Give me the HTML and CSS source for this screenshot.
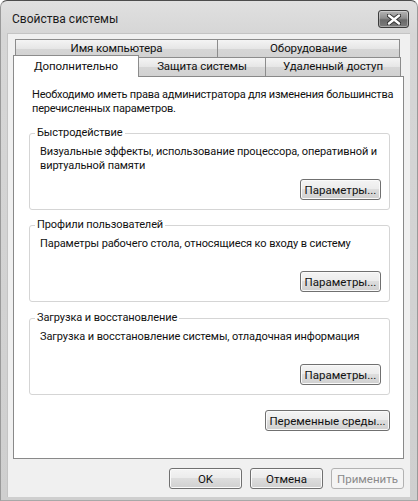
FILE: index.html
```html
<!DOCTYPE html>
<html lang="ru">
<head>
<meta charset="utf-8">
<title>Свойства системы</title>
<link rel="stylesheet" href="styles.css">
</head>
<body>
<div class="window">
  <div class="titlebar">
    <span class="title">Свойства системы</span>
    <button class="close" aria-label="Закрыть">
      <svg width="14" height="11" viewBox="0 0 14 11"><path d="M2 1.5 L12 9.5 M12 1.5 L2 9.5" stroke="#2e2e2e" stroke-width="4.2" stroke-linecap="round"/><path d="M2 1.5 L12 9.5 M12 1.5 L2 9.5" stroke="#ffffff" stroke-width="2.4" stroke-linecap="round"/></svg>
    </button>
  </div>
  <div class="client">
    <div class="tabs">
      <div class="tab-row back">
        <div class="tab t-name">Имя компьютера</div>
        <div class="tab t-hw">Оборудование</div>
      </div>
      <div class="tab-row front">
        <div class="tab t-adv selected">Дополнительно</div>
        <div class="tab t-prot">Защита системы</div>
        <div class="tab t-remote">Удаленный доступ</div>
      </div>
    </div>
    <div class="panel">
      <p class="intro">Необходимо иметь права администратора для изменения большинства перечисленных параметров.</p>
      <fieldset class="group g1">
        <legend>Быстродействие</legend>
        <p class="desc">Визуальные эффекты, использование процессора, оперативной и виртуальной памяти</p>
        <div class="group-actions"><button class="btn btn-params">Параметры...</button></div>
      </fieldset>
      <fieldset class="group g2">
        <legend>Профили пользователей</legend>
        <p class="desc">Параметры рабочего стола, относящиеся ко входу в систему</p>
        <div class="group-actions"><button class="btn btn-params">Параметры...</button></div>
      </fieldset>
      <fieldset class="group g3">
        <legend>Загрузка и восстановление</legend>
        <p class="desc">Загрузка и восстановление системы, отладочная информация</p>
        <div class="group-actions"><button class="btn btn-params">Параметры...</button></div>
      </fieldset>
      <div class="env-row"><button class="btn btn-env">Переменные среды...</button></div>
    </div>
    <div class="actions">
      <button class="btn btn-dlg">OK</button>
      <button class="btn btn-dlg">Отмена</button>
      <button class="btn btn-dlg" disabled>Применить</button>
    </div>
  </div>
</div>
</body>
</html>
```

FILE: styles.css
```css
* { box-sizing: border-box; }

html, body {
  margin: 0;
  padding: 0;
  background: #ffffff;
}

body {
  width: 418px;
  height: 501px;
  overflow: hidden;
  font-family: Roboto, "Liberation Sans", Arial, sans-serif;
  font-size: 11px;
  letter-spacing: -0.1px;
  color: #111;
}

.window {
  width: 418px;
  height: 501px;
  display: flex;
  flex-direction: column;
  border: 1px solid #a8a8a8;
  border-top-color: #4c4c4c;
  border-left-color: #9a9a9a;
  border-right-color: #9a9a9a;
  border-radius: 7px 7px 0 0;
  background: linear-gradient(180deg, #e0e0e0 0px, #d6d6d6 33px, #cfcfcf 100%);
}

.titlebar {
  height: 32px;
  flex: none;
  display: flex;
  align-items: flex-start;
  padding-left: 11px;
}

.title {
  margin-top: 11px;
  font-size: 12px;
  letter-spacing: 0;
  color: #1a1a1a;
}

.close {
  margin-left: auto;
  margin-right: 8px;
  margin-top: 9px;
  width: 31px;
  height: 18px;
  padding: 0;
  display: flex;
  align-items: center;
  justify-content: center;
  border: 1px solid #3c3c3c;
  border-radius: 3px;
  background: linear-gradient(180deg, #b4b4b4 0%, #8e8e8e 45%, #6a6a6a 55%, #7c7c7c 100%);
  box-shadow: inset 0 0 0 1px rgba(255,255,255,0.35);
}

.client {
  flex: 1;
  margin: 0 7px 3px 6px;
  background: #f0f0f0;
  border-left: 1px solid #c4c4c4;
  border-top: 1px solid #c4c4c4;
  padding: 5px 6px 0 5px;
}

/* Tabs */
.tabs {
  width: 391px;
}

.tab-row {
  display: flex;
  height: 19px;
}

.tab-row.back {
  margin-left: 2px;
}

.tab-row.front {
  margin-top: -1px;
}

.tab {
  height: 19px;
  border: 1px solid #8c8c8c;
  border-bottom: none;
  background: linear-gradient(180deg, #f4f4f4 0%, #e6e6e6 50%, #d6d6d6 51%, #d2d2d2 100%);
  text-align: center;
  line-height: 17px;
  font-size: 11.5px;
  color: #111;
  white-space: nowrap;
}

.tab-row.back .tab {
  border-bottom: 1px solid #8c8c8c;
}

.t-name { width: 203px; }
.t-hw { width: 183px; margin-left: -1px; }

.t-adv { width: 126px; }
.t-prot { width: 128px; margin-left: -1px; }
.t-remote { width: 136px; margin-left: -1px; }

.tab.selected {
  position: relative;
  z-index: 1;
  height: 22px;
  margin-top: -2px;
  background: #ffffff;
  line-height: 20px;
}

/* Panel */
.panel {
  width: 391px;
  height: 383px;
  border: 1px solid #898989;
  background: #ffffff;
  padding: 11px 13px 0 15px;
}

.intro {
  margin: 0 -13px 0 0;
  padding-left: 3px;
  line-height: 14px;
  font-size: 11px;
  letter-spacing: -0.22px;
}

.group {
  margin: 10px 0 0 0;
  height: 84px;
  border: 1px solid #d5d5d5;
  border-radius: 3px;
  padding: 5px 8px 9px 5px;
  display: flex;
  flex-direction: column;
  min-width: 0;
}

.group + .group {
  margin-top: 8px;
}

.group.g3 {
  margin-top: 9px;
}

.group legend {
  padding: 0 2px;
  line-height: 14px;
  color: #111;
}

.desc {
  margin: 0 -2px 0 5px;
  line-height: 14px;
}

.group-actions {
  margin-top: auto;
  display: flex;
  justify-content: flex-end;
}

.btn {
  font-family: inherit;
  font-size: 11.5px;
  letter-spacing: 0;
  color: #111;
  height: 21px;
  padding: 0;
  border: 1px solid #707070;
  border-radius: 3px;
  background: linear-gradient(180deg, #f4f4f4 0%, #ececec 45%, #dddddd 50%, #d0d0d0 100%);
  box-shadow: inset 0 0 0 1px #fafafa;
}

.btn-params { width: 81px; }

.env-row {
  margin-top: 15px;
  display: flex;
  justify-content: flex-end;
}

.btn-env { width: 125px; }

.actions {
  margin-top: 9px;
  display: flex;
  justify-content: flex-end;
  gap: 8px;
}

.btn-dlg { width: 73px; }

.btn[disabled] {
  color: #8a8a8a;
  border-color: #b2b2b2;
  background: #f4f4f4;
  box-shadow: none;
}
```
